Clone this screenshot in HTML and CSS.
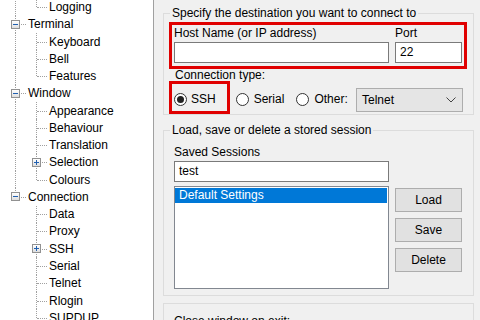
FILE: index.html
```html
<!DOCTYPE html>
<html lang="en">
<head>
    <meta charset="UTF-8">
    <meta name="viewport" content="width=device-width, initial-scale=1.0">
    <link rel="stylesheet" href="styles.css">
    <title>PuTTY Configuration</title>
</head>
<body>
    <div class="window">
        <div class="tree">
            <div class="tree-rows">
                <div class="row"><span class="cell v"></span><span class="cell elbow"></span><span class="label">Logging</span></div>
                <div class="row"><span class="cell tee"><span class="box"></span></span><span class="label">Terminal</span></div>
                <div class="row"><span class="cell v"></span><span class="cell tee"></span><span class="label">Keyboard</span></div>
                <div class="row"><span class="cell v"></span><span class="cell tee"></span><span class="label">Bell</span></div>
                <div class="row"><span class="cell v"></span><span class="cell elbow"></span><span class="label">Features</span></div>
                <div class="row"><span class="cell tee"><span class="box"></span></span><span class="label">Window</span></div>
                <div class="row"><span class="cell v"></span><span class="cell tee"></span><span class="label">Appearance</span></div>
                <div class="row"><span class="cell v"></span><span class="cell tee"></span><span class="label">Behaviour</span></div>
                <div class="row"><span class="cell v"></span><span class="cell tee"></span><span class="label">Translation</span></div>
                <div class="row"><span class="cell v"></span><span class="cell tee"><span class="box plus"></span></span><span class="label">Selection</span></div>
                <div class="row"><span class="cell v"></span><span class="cell elbow"></span><span class="label">Colours</span></div>
                <div class="row"><span class="cell elbow"><span class="box"></span></span><span class="label">Connection</span></div>
                <div class="row"><span class="cell"></span><span class="cell tee"></span><span class="label">Data</span></div>
                <div class="row"><span class="cell"></span><span class="cell tee"></span><span class="label">Proxy</span></div>
                <div class="row"><span class="cell"></span><span class="cell tee"><span class="box plus"></span></span><span class="label">SSH</span></div>
                <div class="row"><span class="cell"></span><span class="cell tee"></span><span class="label">Serial</span></div>
                <div class="row"><span class="cell"></span><span class="cell tee"></span><span class="label">Telnet</span></div>
                <div class="row"><span class="cell"></span><span class="cell tee"></span><span class="label">Rlogin</span></div>
                <div class="row"><span class="cell"></span><span class="cell elbow"></span><span class="label">SUPDUP</span></div>
            </div>
        </div>

        <div class="panel">
            <fieldset class="group">
                <legend>Specify the destination you want to connect to</legend>
                <div class="mark dest">
                    <div class="field-label">Host Name (or IP address)</div>
                    <div class="field-label">Port</div>
                    <div class="input"></div>
                    <div class="input">22</div>
                </div>
                <div class="caption">Connection type:</div>
                <div class="radios">
                    <div class="mark ssh"><span class="radio checked"></span>SSH</div>
                    <div class="opt serial"><span class="radio"></span>Serial</div>
                    <div class="opt other"><span class="radio"></span>Other:</div>
                    <div class="select">
                        <span>Telnet</span>
                        <svg width="10" height="6" viewBox="0 0 10 6"><path d="M0.5 0.5 L5 5 L9.5 0.5" fill="none" stroke="#444" stroke-width="1"/></svg>
                    </div>
                </div>
            </fieldset>

            <fieldset class="group second">
                <legend>Load, save or delete a stored session</legend>
                <div class="sessions">
                    <div class="field-label">Saved Sessions</div>
                    <div class="input session-name">test</div>
                    <div class="listbox">
                        <div class="list-item selected">Default Settings</div>
                    </div>
                    <div class="buttons">
                        <div class="button">Load</div>
                        <div class="button">Save</div>
                        <div class="button">Delete</div>
                    </div>
                </div>
            </fieldset>

            <fieldset class="group third">
                <div class="caption exit">Close window on exit:</div>
            </fieldset>
        </div>
    </div>
</body>
</html>
```

FILE: styles.css
```css
body {
    margin: 0;
    font-family: 'Liberation Sans', Arial, sans-serif;
    font-size: 12px;
    color: #000;
    background-color: #f0f0f0;
}

.window {
    display: flex;
    height: 320px;
    overflow: hidden;
}

/* category tree */
.tree {
    width: 153px;
    flex: none;
    background-color: #fff;
    border-right: 1px solid #a0a0a0;
    overflow: hidden;
}

.tree-rows {
    margin-top: -1.64px;
}

.row {
    display: flex;
    align-items: center;
    height: 17.28px;
    padding-left: 5px;
    white-space: nowrap;
}

.cell {
    position: relative;
    width: 21px;
    height: 100%;
    flex: none;
    display: flex;
    align-items: center;
    justify-content: center;
}

.cell.v::before,
.cell.tee::before,
.cell.elbow::before {
    content: "";
    position: absolute;
    left: 10px;
    top: 0;
    bottom: 0;
    border-left: 1px dotted #a0a0a0;
}

.cell.elbow::before {
    bottom: 50%;
}

.cell.tee::after,
.cell.elbow::after {
    content: "";
    position: absolute;
    left: 11px;
    right: 0;
    top: 50%;
    border-top: 1px dotted #a0a0a0;
}

.box {
    position: relative;
    z-index: 1;
    width: 9px;
    height: 9px;
    box-sizing: border-box;
    margin-right: 1px;
    border: 1px solid #919191;
    background: linear-gradient(#fff, #dedede);
    display: grid;
    place-items: center;
}

.box::before {
    content: "";
    grid-area: 1 / 1;
    width: 5px;
    height: 1px;
    background-color: #2160b0;
}

.box.plus::after {
    content: "";
    grid-area: 1 / 1;
    width: 1px;
    height: 5px;
    background-color: #2160b0;
}

.label {
    margin-left: 2px;
}

/* settings panel */
.panel {
    flex: 1;
    padding: 4px 6px 0 9px;
    display: flex;
    flex-direction: column;
}

.group {
    margin: 0;
    padding: 0;
    min-width: 0;
    border: 1px solid #dcdcdc;
}

.group legend {
    margin-left: 6px;
    padding: 0 2px;
    line-height: 18px;
}

.mark {
    border: 3px solid #e00000;
}

.dest {
    margin: 0 6px 0 5px;
    padding: 0 2px 3px;
    display: grid;
    grid-template-columns: 215px 67px;
    column-gap: 6px;
}

.field-label {
    line-height: 16px;
}

.input {
    height: 21px;
    box-sizing: border-box;
    margin-top: 1px;
    border: 1px solid #7a7a7a;
    background-color: #fff;
    padding: 0 4px;
    line-height: 19px;
}

.caption {
    margin-left: 11px;
    line-height: 12px;
}

.radios {
    display: flex;
    margin-left: 5px;
    height: 33px;
}

.ssh {
    box-sizing: border-box;
    display: flex;
    align-items: center;
    gap: 4px;
    padding: 3px 11px 0 2px;
}

.opt {
    display: flex;
    align-items: center;
    gap: 5px;
    padding-top: 3px;
}

.serial {
    margin-left: 6px;
}

.other {
    margin-left: 12px;
}

.radio {
    width: 13px;
    height: 13px;
    box-sizing: border-box;
    border: 1px solid #333;
    border-radius: 50%;
    background-color: #fff;
    display: grid;
    place-items: center;
}

.radio.checked::before {
    content: "";
    width: 7px;
    height: 7px;
    border-radius: 50%;
    background-color: #222;
}

.select {
    width: 107px;
    box-sizing: border-box;
    margin: 7px 10px 2px auto;
    border: 1px solid #adadad;
    background-color: #e5e5e5;
    display: flex;
    align-items: center;
    justify-content: space-between;
    padding: 0 6px 0 5px;
}

.second {
    margin-top: 6px;
}

.sessions {
    margin: 5px 11px 6px 10px;
    display: grid;
    grid-template-columns: 215px 67px;
    column-gap: 6px;
}

.sessions .field-label,
.session-name,
.listbox {
    grid-column: 1;
}

.listbox {
    height: 103px;
    box-sizing: border-box;
    margin-top: 4px;
    border: 1px solid #828790;
    background-color: #fff;
    padding: 1px 1px 0 0;
}

.list-item {
    line-height: 15px;
    padding-left: 4px;
}

.list-item.selected {
    background-color: #0078d7;
    color: #fff;
}

.buttons {
    grid-column: 2;
    grid-row: 3;
    margin-top: 6px;
    display: flex;
    flex-direction: column;
    gap: 6px;
}

.button {
    height: 24px;
    box-sizing: border-box;
    border: 1px solid #adadad;
    background-color: #e1e1e1;
    text-align: center;
    line-height: 22px;
}

.third {
    margin-top: 7px;
    padding: 9px 0 10px;
}

.exit {
    margin-left: 10px;
    line-height: 16px;
}
```
